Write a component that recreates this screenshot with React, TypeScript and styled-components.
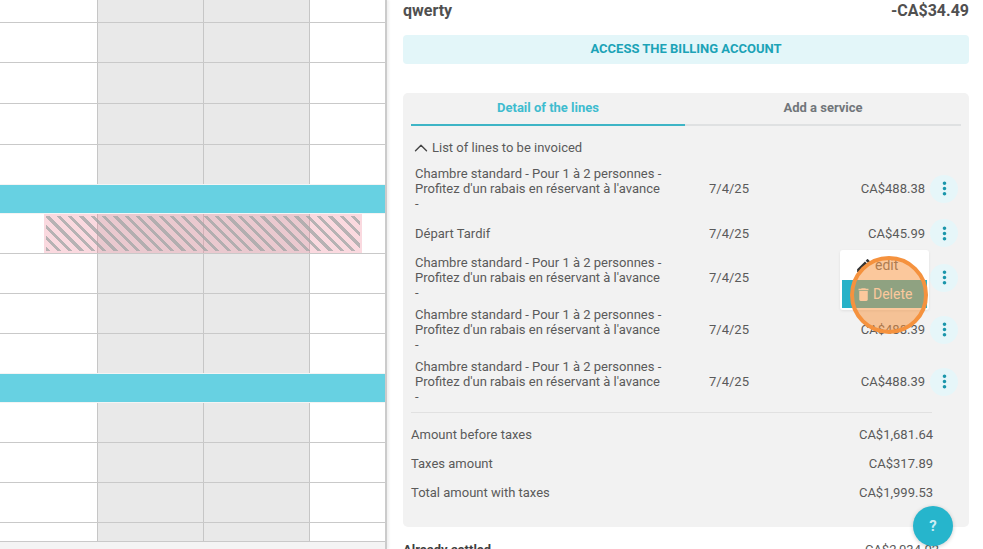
import React from 'react';
import styled, { createGlobalStyle } from 'styled-components';
import { MdEdit, MdDelete, MdMoreVert } from 'react-icons/md';
import { ChevronUp } from 'lucide-react';

const GlobalStyle = createGlobalStyle`
    html, body {
        margin: 0;
        padding: 0;
        background: #fff;
    }
    body {
        font-family: Roboto, "Liberation Sans", sans-serif;
        color: #5a5a5a;
    }
`;

const Page = styled.div`
    width: 983px;
    height: 549px;
    display: flex;
    overflow: hidden;
    position: relative;
`;

/* left: scheduler grid */
const Scheduler = styled.div`
    width: 385px;
    height: 549px;
    flex-shrink: 0;
    border-right: 2px solid #cbcbcb;
    box-shadow: 2px 0 2px #f0f0f0;
    background: #f4f4f4;
`;

const GridRow = styled.div<{ $h: number; $line?: boolean; $gap?: boolean }>`
    display: grid;
    grid-template-columns: 97px 106px 106px 76px;
    height: ${({ $h }) => $h}px;
    box-sizing: border-box;
    background: #fff;
    position: relative;
    border-bottom: ${({ $line }) => ($line ? '1px solid #c9c9c9' : 'none')};
    margin-bottom: ${({ $gap }) => ($gap ? 1 : 0)}px;
`;

const Cell = styled.div<{ $shaded?: boolean; $first?: boolean }>`
    background: ${({ $shaded }) => ($shaded ? '#e9e9e9' : '#fff')};
    border-left: ${({ $first }) => ($first ? 'none' : '1px solid #c6c6c6')};
`;

const Band = styled.div`
    height: 28px;
    background: #67d1e2;
    margin-bottom: 1px;
`;

const Hatched = styled.div`
    position: absolute;
    left: 44px;
    top: 0;
    width: 318px;
    height: 39px;
    box-sizing: border-box;
    border: 2px solid transparent;
    background:
        repeating-linear-gradient(45deg, rgba(160, 165, 165, 0.75) 0 3px, transparent 3px 8px) padding-box,
        rgba(240, 130, 150, 0.3) border-box;
`;

/* right: billing panel */
const Side = styled.div`
    width: 566px;
    margin-left: 16px;
    flex-shrink: 0;
    padding-top: 1px;
`;

const Header = styled.div`
    display: flex;
    justify-content: space-between;
    align-items: center;
    height: 18px;
    font-size: 16px;
    font-weight: 700;
    color: #505050;
`;

const AccessButton = styled.button`
    display: block;
    width: 100%;
    height: 29px;
    margin-top: 16px;
    border: none;
    border-radius: 4px;
    background: #e3f6f9;
    color: #1ba3b7;
    font-family: inherit;
    font-size: 13px;
    line-height: 27px;
    font-weight: 700;
    padding: 0 0 2px;
`;

const Card = styled.div`
    margin-top: 29px;
    height: 434px;
    box-sizing: border-box;
    padding: 0 8px;
    background: #f2f2f2;
    border-radius: 5px;
`;

const Tabs = styled.div`
    display: grid;
    grid-template-columns: 274px 1fr;
`;

const Tab = styled.div<{ $active?: boolean }>`
    height: 33px;
    box-sizing: border-box;
    padding-bottom: 2px;
    display: flex;
    align-items: center;
    justify-content: center;
    font-size: 13px;
    font-weight: 700;
    color: ${({ $active }) => ($active ? '#3fbccf' : '#71767a')};
    border-bottom: 2px solid ${({ $active }) => ($active ? '#3eb5c6' : '#dfe1e2')};
`;

const ListTitle = styled.div`
    display: flex;
    align-items: center;
    height: 15px;
    margin-top: 14px;
    padding-left: 3px;
    font-size: 13px;

    svg {
        flex-shrink: 0;
        color: #444;
        margin-left: -4px;
        margin-right: 0;
    }
`;

const Lines = styled.div`
    display: flex;
    flex-direction: column;
    gap: 7px;
    margin-top: 11px;
`;

const Line = styled.div`
    display: grid;
    grid-template-columns: 294px 100px 116px 28px;
    align-items: center;
    min-height: 30px;
    padding-left: 4px;
    font-size: 13px;
    line-height: 15px;
    position: relative;
`;

const LineName = styled.div`
    white-space: pre-line;
`;

const Amount = styled.div`
    text-align: right;
`;

const DotsButton = styled.div`
    width: 28px;
    height: 28px;
    margin-left: 5px;
    border-radius: 50%;
    background: #e6f6f9;
    color: #1a96ab;
    display: flex;
    align-items: center;
    justify-content: center;

    svg {
        width: 21px;
        height: 21px;
    }
`;

const Divider = styled.div`
    height: 1px;
    width: 521px;
    margin-top: 8px;
    background: #e1e1e1;
`;

const Totals = styled.div`
    display: flex;
    flex-direction: column;
    gap: 14px;
    width: 522px;
    margin-top: 14px;
`;

const TotalRow = styled.div`
    display: flex;
    justify-content: space-between;
    font-size: 13px;
    line-height: 15px;
`;

const Settled = styled.div`
    display: flex;
    justify-content: space-between;
    width: 536px;
    margin-top: 15px;
    font-size: 13px;
    line-height: 15px;

    strong {
        color: #3f3f3f;
    }
`;

const Menu = styled.div`
    position: absolute;
    left: 840px;
    top: 250px;
    width: 89px;
    height: 60px;
    box-sizing: border-box;
    padding: 0 2px;
    background: #fff;
    border-radius: 3px;
    box-shadow: 0 1px 3px rgba(0, 0, 0, 0.08);
    font-size: 14px;
`;

const MenuItem = styled.div<{ $active?: boolean }>`
    display: flex;
    align-items: center;
    gap: ${({ $active }) => ($active ? 1 : 3)}px;
    height: ${({ $active }) => ($active ? 28 : 30)}px;
    padding-left: 13px;
    color: ${({ $active }) => ($active ? '#fff' : '#666')};
    background: ${({ $active }) => ($active ? '#27b2c8' : 'transparent')};

    svg {
        width: 17px;
        height: 17px;
        color: ${({ $active }) => ($active ? '#fff' : '#333')};
    }
`;

const Spotlight = styled.div`
    position: absolute;
    left: 850px;
    top: 256px;
    width: 78px;
    height: 78px;
    box-sizing: border-box;
    border: 4px solid #f5923e;
    border-radius: 50%;
    background: rgba(247, 146, 58, 0.5);
`;

const HelpButton = styled.div`
    position: absolute;
    left: 913px;
    top: 506px;
    width: 40px;
    height: 40px;
    border-radius: 50%;
    background: #26b5cc;
    color: #cdeef4;
    font-size: 15px;
    font-weight: 700;
    display: flex;
    align-items: center;
    justify-content: center;
    box-shadow: 0 1px 4px rgba(0, 0, 0, 0.2);
`;

const ROOM = 'Chambre standard - Pour 1 à 2 personnes -\nProfitez d\'un rabais en réservant à l\'avance\n-';

const lines = [
    { name: ROOM, date: '7/4/25', amount: 'CA$488.38' },
    { name: 'Départ Tardif', date: '7/4/25', amount: 'CA$45.99' },
    { name: ROOM, date: '7/4/25', amount: 'CA$488.39' },
    { name: ROOM, date: '7/4/25', amount: 'CA$488.39' },
    { name: ROOM, date: '7/4/25', amount: 'CA$488.39' },
];

const totals = [
    { label: 'Amount before taxes', value: 'CA$1,681.64' },
    { label: 'Taxes amount', value: 'CA$317.89' },
    { label: 'Total amount with taxes', value: 'CA$1,999.53' },
];

function Row({ h, line, gap, children }: { h: number; line?: boolean; gap?: boolean; children?: React.ReactNode }) {
    return (
        <GridRow $h={h} $line={line} $gap={gap}>
            <Cell $first />
            <Cell $shaded />
            <Cell $shaded />
            <Cell />
            {children}
        </GridRow>
    );
}

export default function App() {
    return (
        <Page>
            <GlobalStyle />
            <Scheduler>
                <Row h={23} line />
                <Row h={40} line />
                <Row h={41} line />
                <Row h={41} line />
                <Row h={39} gap />
                <Band />
                <Row h={40} line>
                    <Hatched />
                </Row>
                <Row h={40} line />
                <Row h={40} line />
                <Row h={39} gap />
                <Band />
                <Row h={40} line />
                <Row h={40} line />
                <Row h={40} line />
                <Row h={19} line />
            </Scheduler>
            <Side>
                <Header>
                    <span>qwerty</span>
                    <span>-CA$34.49</span>
                </Header>
                <AccessButton>ACCESS THE BILLING ACCOUNT</AccessButton>
                <Card>
                    <Tabs>
                        <Tab $active>Detail of the lines</Tab>
                        <Tab>Add a service</Tab>
                    </Tabs>
                    <ListTitle>
                        <ChevronUp size={22} strokeWidth={1.5} />
                        List of lines to be invoiced
                    </ListTitle>
                    <Lines>
                        {lines.map((l, i) => (
                            <Line key={i}>
                                <LineName>{l.name}</LineName>
                                <span>{l.date}</span>
                                <Amount>{l.amount}</Amount>
                                <DotsButton>
                                    <MdMoreVert />
                                </DotsButton>
                            </Line>
                        ))}
                    </Lines>
                    <Divider />
                    <Totals>
                        {totals.map((t) => (
                            <TotalRow key={t.label}>
                                <span>{t.label}</span>
                                <span>{t.value}</span>
                            </TotalRow>
                        ))}
                    </Totals>
                </Card>
                <Settled>
                    <strong>Already settled</strong>
                    <span>CA$2,034.02</span>
                </Settled>
            </Side>
            <Menu>
                <MenuItem>
                    <MdEdit />
                    edit
                </MenuItem>
                <MenuItem $active>
                    <MdDelete />
                    Delete
                </MenuItem>
            </Menu>
            <Spotlight />
            <HelpButton>?</HelpButton>
        </Page>
    );
}
